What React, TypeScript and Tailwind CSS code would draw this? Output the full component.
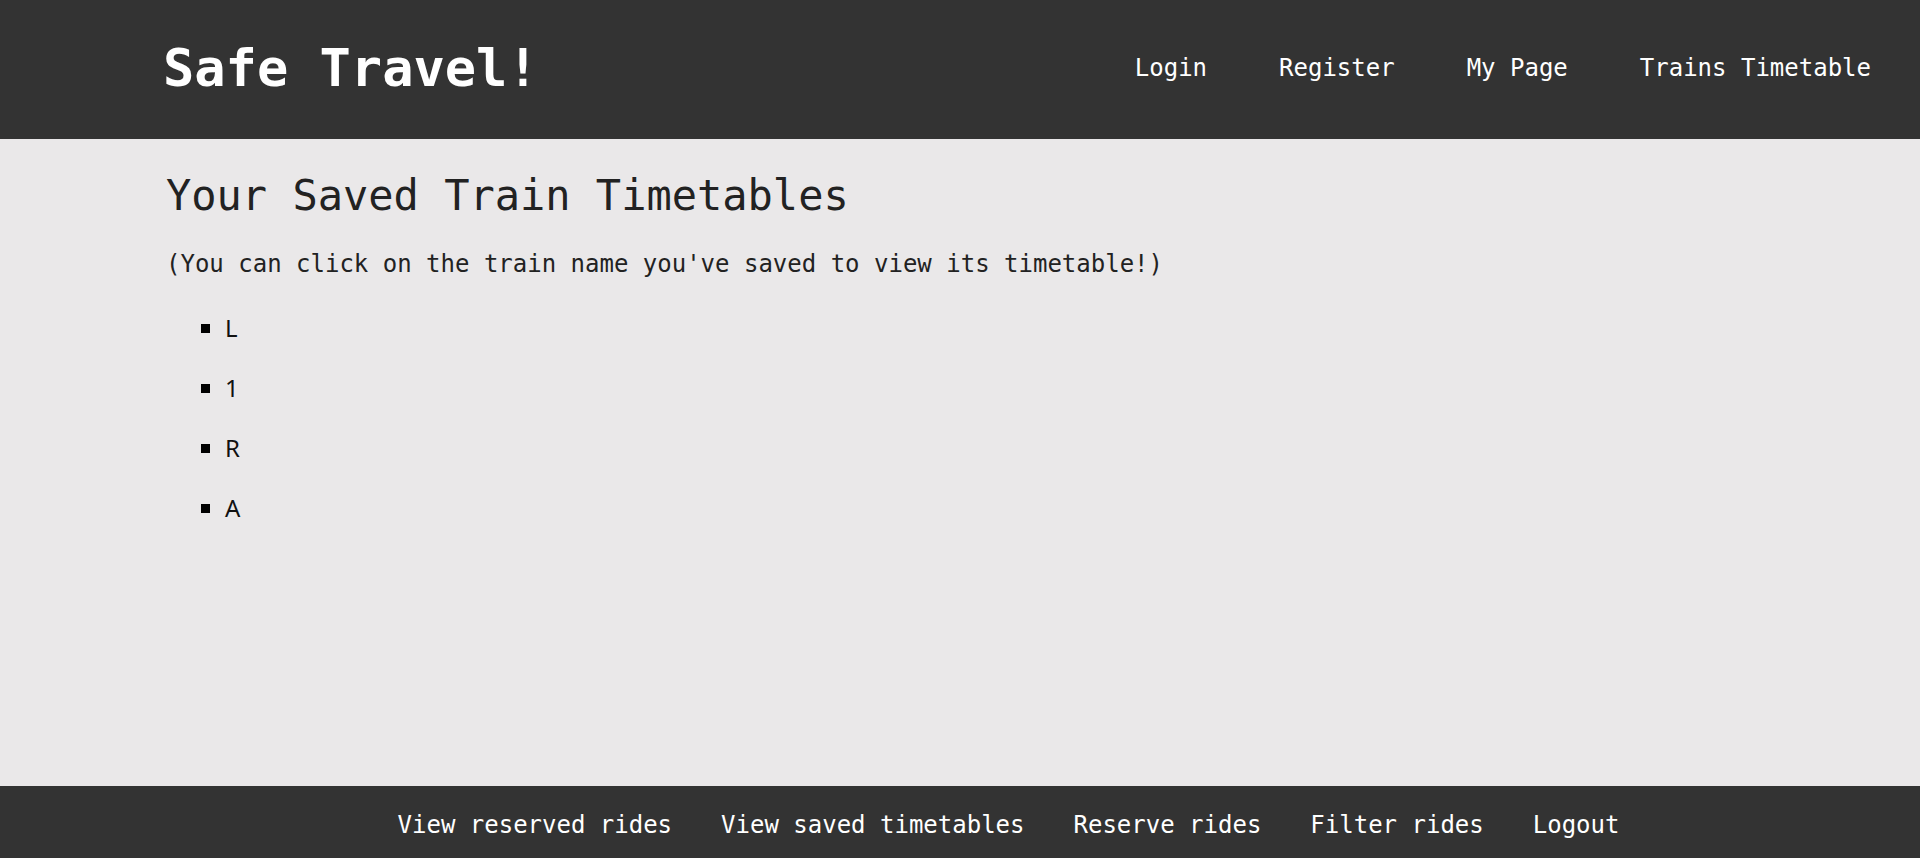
const mono = { fontFamily: '"DejaVu Sans Mono", "Liberation Mono", monospace' };

const topLinks = ["Login", "Register", "My Page", "Trains Timetable"];
const bottomLinks = [
  "View reserved rides",
  "View saved timetables",
  "Reserve rides",
  "Filter rides",
  "Logout",
];
const saved = ["L", "1", "R", "A"];

export default function App() {
  return (
    <div className="min-h-screen flex flex-col bg-[#eae8e9]">
      <header className="h-[139px] bg-[#333333] flex items-center justify-between pl-[163px] pr-[49px] pb-[4px] font-['DejaVu_Sans_Mono',monospace]">
        <h1 className="text-[52px] font-bold text-white leading-none">Safe Travel!</h1>
        <nav className="flex gap-[72px] text-[24px] text-white">
          {topLinks.map((l) => (
            <a key={l} href="#" className="leading-none">
              {l}
            </a>
          ))}
        </nav>
      </header>

      <main className="flex-1 pl-[166px] pt-[32px] text-[#222]">
        <h2 className="text-[42px] leading-[50px] font-normal font-['DejaVu_Sans_Mono',monospace]">
          Your Saved Train Timetables
        </h2>
        <p className="mt-[29px] text-[24px] leading-[29px] font-['DejaVu_Sans_Mono',monospace]">
          (You can click on the train name you've saved to view its timetable!)
        </p>
        <ul className="mt-[31px] pl-[35px] flex flex-col gap-[24px] font-['Noto_Sans',sans-serif] text-[24px] text-[#111]">
          {saved.map((s) => (
            <li key={s} className="flex items-center leading-[36px]">
              <span className="w-[9px] h-[9px] bg-black mr-[15px]" />
              <a href="#">{s}</a>
            </li>
          ))}
        </ul>
      </main>

      <footer className="h-[72px] bg-[#333333] flex items-center justify-center pl-[97px] pt-[5px] gap-[49px] text-[24px] text-white" style={mono}>
        {bottomLinks.map((l) => (
          <a key={l} href="#" className="leading-none">
            {l}
          </a>
        ))}
      </footer>
    </div>
  );
}
